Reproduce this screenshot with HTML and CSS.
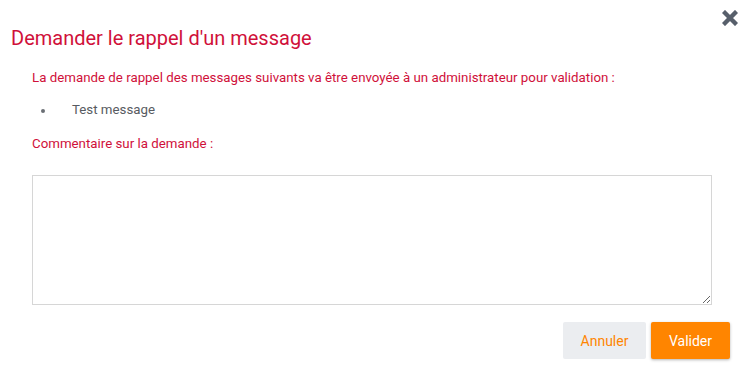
FILE: index.html
```html
<!DOCTYPE html>
<html lang="fr">
<head>
<meta charset="utf-8">
<link rel="stylesheet" href="styles.css">
</head>
<body>
<div class="modal">
  <button class="close" aria-label="Fermer">
    <svg width="16" height="16" viewBox="0 0 16 16"><path d="M3 3 L13 13 M13 3 L3 13" stroke="#575f6b" stroke-width="4.4" stroke-linecap="square"/></svg>
  </button>
  <h1 class="title">Demander le rappel d'un message</h1>
  <div class="body">
    <p class="intro">La demande de rappel des messages suivants va être envoyée à un administrateur pour validation :</p>
    <ul class="list"><li>Test message</li></ul>
    <p class="label">Commentaire sur la demande :</p>
    <textarea class="comment"></textarea>
  </div>
  <div class="footer">
    <button class="btn cancel">Annuler</button>
    <button class="btn ok">Valider</button>
  </div>
</div>
</body>
</html>
```
FILE: styles.css
```css
html, body { margin: 0; padding: 0; background: #fff; }
body { font-family: Roboto, "Liberation Sans", sans-serif; width: 744px; height: 380px; overflow: hidden; }
.modal { position: relative; padding: 24px 14px 0 11px; }
.close { position: absolute; top: 10px; right: 6px; border: 0; background: none; padding: 0; width: 16px; height: 16px; cursor: pointer; }
.close svg { display: block; }
.title { margin: 0; font-size: 20px; font-weight: 400; color: #d0103a; line-height: 28px; }
.body { padding: 17px 0 0 21px; }
.intro { margin: 0; font-size: 13.3px; line-height: 18px; color: #d0103a; }
.list { margin: 14px 0 0 0; padding: 0; list-style: none; font-size: 13.3px; line-height: 18px; color: #575b61; }
.list li { display: flex; align-items: center; }
.list li::before { content: ""; width: 4px; height: 4px; border-radius: 50%; background: #6b6f75; margin: 1px 27px 0 9px; }
.label { margin: 16px 0 0 0; font-size: 13.3px; line-height: 18px; color: #d0103a; }
.comment { display: block; box-sizing: border-box; margin-top: 22px; width: 680px; height: 130px; border: 1px solid #d6d6d6; resize: vertical; font-family: inherit; }
.footer { display: flex; justify-content: flex-end; gap: 5px; margin-top: 17px; padding-right: 0; }
.btn { height: 37px; border: 0; border-radius: 2px; font-family: inherit; font-size: 14px; padding: 0; cursor: pointer; }
.cancel { width: 83px; background: #ebedf0; color: #ff8500; }
.ok { width: 79px; background: #ff8500; color: #fff; box-shadow: 0 1px 3px rgba(0,0,0,0.3); }
```
